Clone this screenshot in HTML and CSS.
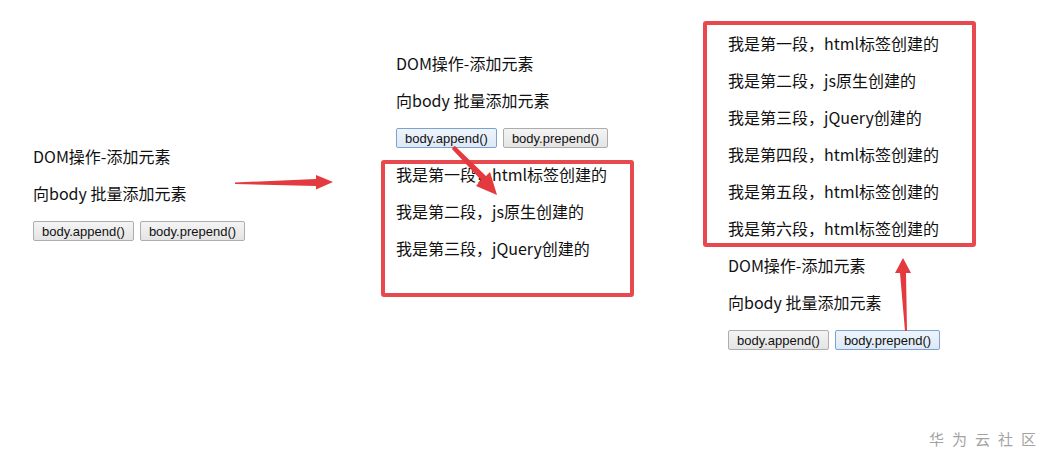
FILE: index.html
```html
<!DOCTYPE html>
<html lang="zh-CN">
<head>
    <meta charset="UTF-8">
    <title>DOM操作-添加元素</title>
    <link rel="stylesheet" href="styles.css">
</head>
<body>
<div class="canvas">
    <!-- step 1: initial page -->
    <div class="shot shot-1">
        <p>DOM操作-添加元素</p>
        <p>向body 批量添加元素</p>
        <div class="btns">
            <button>body.append()</button>
            <button>body.prepend()</button>
        </div>
    </div>

    <!-- step 2: after append -->
    <div class="shot shot-2">
        <p>DOM操作-添加元素</p>
        <p>向body 批量添加元素</p>
        <div class="btns">
            <button class="focus">body.append()</button>
            <button>body.prepend()</button>
        </div>
        <p>我是第一段，html标签创建的</p>
        <p>我是第二段，js原生创建的</p>
        <p>我是第三段，jQuery创建的</p>
    </div>

    <!-- step 3: after prepend -->
    <div class="shot shot-3">
        <p>我是第一段，html标签创建的</p>
        <p>我是第二段，js原生创建的</p>
        <p>我是第三段，jQuery创建的</p>
        <p>我是第四段，html标签创建的</p>
        <p>我是第五段，html标签创建的</p>
        <p>我是第六段，html标签创建的</p>
        <p>DOM操作-添加元素</p>
        <p>向body 批量添加元素</p>
        <div class="btns">
            <button>body.append()</button>
            <button class="focus">body.prepend()</button>
        </div>
    </div>

    <!-- annotations -->
    <div class="mark mark-2"></div>
    <div class="mark mark-3"></div>
    <svg class="arrows" width="1049" height="465" viewBox="0 0 1049 465">
        <polygon points="235,182.5 316,179 316,175 333,182 316,189.5 316,186 235,184" />
        <polygon points="453,147 455,146 486,176 490,172 497,195 476,186 481,180 452,149" />
        <polygon points="905,331 907,331 906,273 911,273 903,258 895,273 900,273" />
    </svg>

    <div class="watermark">华为云社区</div>
</div>
</body>
</html>
```

FILE: styles.css
```css
body {
    margin: 0;
    background-color: #fff;
    font-family: "Noto Sans CJK SC", "Noto Sans", sans-serif;
    color: #111;
}
.canvas {
    position: relative;
    width: 1049px;
    height: 465px;
    overflow: hidden;
}
.shot {
    position: absolute;
}
.shot-1 {
    left: 33px;
    top: 146px;
}
.shot-2 {
    left: 396px;
    top: 53px;
}
.shot-3 {
    left: 728px;
    top: 33px;
}
.shot p {
    margin: 0 0 16px;
    font-size: 16px;
    line-height: 21px;
    white-space: nowrap;
}
.btns {
    display: flex;
    gap: 6px;
    margin: 17px 0 16px;
}
button {
    height: 20px;
    padding: 0 8px;
    font-family: "Liberation Sans", Arial, sans-serif;
    font-size: 13px;
    color: #111;
    border: 1px solid #adadad;
    border-radius: 2px;
    background: linear-gradient(#f4f4f4, #e4e4e4);
}
button.focus {
    border-color: #7da2ce;
    background: linear-gradient(#eef4fc, #dde9f7);
}
.mark {
    position: absolute;
    border: 4px solid #e8494e;
    border-radius: 3px;
    box-sizing: border-box;
}
.mark-2 {
    left: 381px;
    top: 160px;
    width: 253px;
    height: 137px;
}
.mark-3 {
    left: 703px;
    top: 21px;
    width: 273px;
    height: 226px;
}
.arrows {
    position: absolute;
    left: 0;
    top: 0;
}
.arrows polygon {
    fill: #e4393e;
}
.watermark {
    position: absolute;
    left: 929px;
    top: 428px;
    font-size: 15px;
    letter-spacing: 8px;
    color: #a3a3a3;
}
```
